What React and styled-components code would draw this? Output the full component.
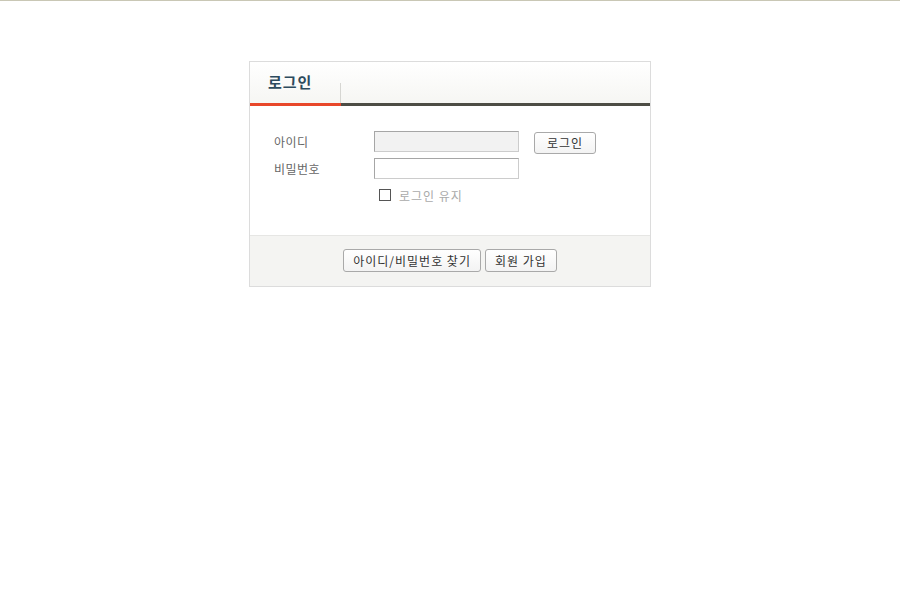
import React from 'react';
import styled, { createGlobalStyle } from 'styled-components';

const GlobalStyle = createGlobalStyle`
  body {
    margin: 0;
    background: #ffffff;
    font-family: "Noto Sans CJK KR", "Noto Sans", sans-serif;
  }
`;

const Page = styled.div`
  border-top: 1px solid #c9c7b5;
  padding-top: 60px;
`;

const Panel = styled.div`
  width: 400px;
  margin: 0 auto;
  border: 1px solid #dcdcdc;
  background: #fff;
`;

const Header = styled.div`
  height: 41px;
  display: flex;
  background: linear-gradient(#ffffff, #f6f6f3);
`;

const Tab = styled.div`
  width: 90px;
  position: relative;
  padding: 10px 0 0 18px;
  box-sizing: border-box;
  font-size: 15px;
  font-weight: bold;
  color: #2d4b5e;
  letter-spacing: 1px;
  line-height: 20px;
  &::after {
    content: '';
    position: absolute;
    right: -1px;
    top: 21px;
    bottom: 0;
    width: 1px;
    background: #d6d6d2;
  }
`;

const Underline = styled.div`
  display: flex;
  height: 3px;
`;

const Segment = styled.div`
  height: 3px;
  width: ${p => (p.$w ? `${p.$w}px` : 'auto')};
  flex: ${p => (p.$w ? 'none' : 1)};
  background: ${p => p.$color};
`;

const Body = styled.div`
  padding: 25px 0 0 24px;
  height: 129px;
  box-sizing: border-box;
`;

const Row = styled.div`
  display: flex;
  align-items: flex-start;
  height: 21px;
  margin-bottom: 6px;
`;

const Label = styled.label`
  width: 100px;
  font-size: 12px;
  line-height: 21px;
  color: #666;
  letter-spacing: 0.5px;
`;

const Input = styled.input`
  width: 145px;
  height: 21px;
  box-sizing: border-box;
  margin: 0;
  border: 1px solid #ccc;
  border-top-color: #a6a6a6;
  border-left-color: #a6a6a6;
  background: ${p => (p.$filled ? '#f2f2f2' : '#fff')};
  outline: none;
`;

const Button = styled.button`
  height: ${p => p.$h || 23}px;
  padding: 0 ${p => p.$px || 9}px;
  margin: ${p => p.$mt || 0}px 0 0 ${p => p.$ml || 0}px;
  border: 1px solid #a9a9a9;
  border-radius: 3px;
  background: linear-gradient(#ffffff, #f3f3f3);
  font-family: "Noto Sans CJK KR", "Noto Sans", sans-serif;
  font-size: 12px;
  color: #333;
  letter-spacing: 1px;
  line-height: 1;
`;

const Keep = styled.div`
  display: flex;
  align-items: center;
  height: 12px;
  margin: 10px 0 0 105px;
  font-size: 12px;
  color: #aaa;
  letter-spacing: 1px;
`;

const Box = styled.span`
  width: 10px;
  height: 10px;
  border: 1px solid #555;
  margin-right: 8px;
`;

const Footer = styled.div`
  height: 51px;
  border-top: 1px solid #e6e6e4;
  background: #f4f4f2;
  display: flex;
  justify-content: center;
  align-items: flex-start;
  padding-top: 13px;
  box-sizing: border-box;
  gap: 4px;
`;

export default function App() {
  return (
    <Page>
      <GlobalStyle />
      <Panel>
        <Header>
          <Tab>로그인</Tab>
        </Header>
        <Underline>
          <Segment $w={91} $color="#e8472a" />
          <Segment $color="#4d4d45" />
        </Underline>
        <Body>
          <Row>
            <Label>아이디</Label>
            <Input $filled />
            <Button $ml={15} $mt={1} $h={22} $px={12}>로그인</Button>
          </Row>
          <Row>
            <Label>비밀번호</Label>
            <Input type="password" />
          </Row>
          <Keep>
            <Box />
            로그인 유지
          </Keep>
        </Body>
        <Footer>
          <Button>아이디/비밀번호 찾기</Button>
          <Button>회원 가입</Button>
        </Footer>
      </Panel>
    </Page>
  );
}
